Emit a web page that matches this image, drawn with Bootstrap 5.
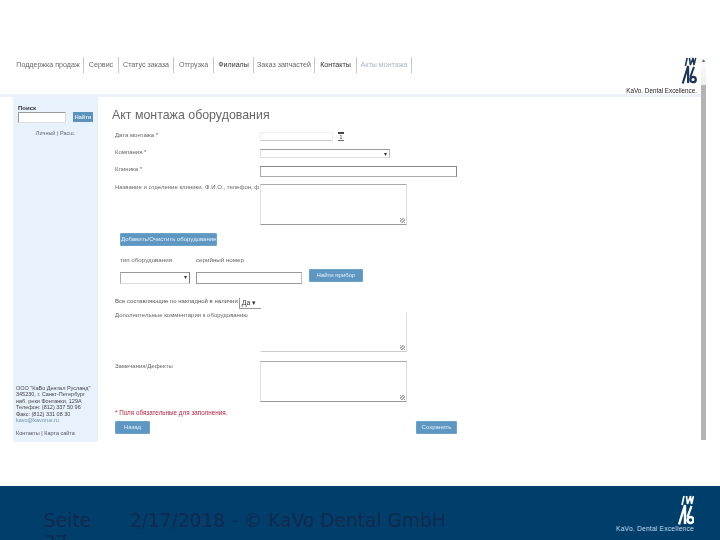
<!DOCTYPE html>
<html lang="ru"><head><meta charset="utf-8"><title>Акт монтажа оборудования</title>
<link rel="stylesheet" href="https://cdn.jsdelivr.net/npm/bootstrap@5.3.0/dist/css/bootstrap.min.css">
<style>
html,body{margin:0;height:540px;overflow:hidden;background:#fff;}
body{font-family:"Liberation Sans",sans-serif;font-size:6px;line-height:1.15;color:#555;}
.slide-top{height:486px;padding-top:57px;}
.shot{width:701px;filter:blur(.3px);}
.topnav{height:37px;padding-left:13px;}
.topnav .tab{height:16px;line-height:17px;border-right:1px solid #c4c8cc;font-size:7.1px;color:#666;white-space:nowrap;text-align:center;flex:none;}
.w1{width:71px;}.w2{width:35px;}.w3{width:55px;}.w4{width:40px;}.w5{width:40px;}.w6{width:61px;}.w7{width:42px;}.w8{width:55px;}
.topnav .tab-strong{color:#333;}
.topnav .tab-muted{color:#a9b4be;}
.brand-top{width:70px;padding-right:4px;}
.brand-top .slogan{font-size:6.3px;color:#222;white-space:nowrap;margin-top:3px;line-height:7px;}
.band{height:3px;background:#edf1fb;}
.side{width:85px;margin-left:13px;height:345px;background:#e8f2fc;padding:8px 5px 6px;font-size:6px;}
.side-title{font-weight:700;color:#333;font-size:6px;line-height:7px;}
.side-input{width:48px;height:11px;background:#fff;border:1px solid #999;border-bottom-color:#ddd;border-right-color:#ddd;}
.side-btn{width:20px;height:10px;background:#5b93bd;color:#dfeaf3;font-size:5.5px;font-weight:700;line-height:10px;text-align:center;}
.side-links{color:#667;text-align:center;margin-top:7px;font-size:5.5px;}
.addr{font-size:5.5px;line-height:6.5px;color:#444;margin-left:-2px;white-space:nowrap;}
.addr .mail{color:#6d8fae;}
.addr .foot{margin-top:6px;color:#556;}
.body-col{padding:8px 0 0 14px;width:360px;}
.page-h{font-size:12.4px;font-weight:400;color:#666;margin:0 0 7px;line-height:20px;white-space:nowrap;}
.lbl{width:145px;flex:none;font-size:6px;color:#666;white-space:nowrap;}
.frow{margin-left:3px;}
.fld{height:9px;border:1px solid #ddd;background:#fff;display:block;}
.fld-date{width:73px;border-color:#eee #eee #ccc #eee;}
.cal{width:6px;height:9px;margin-left:5px;border-top:2px solid #444;border-bottom:1px solid #666;color:#444;font-size:6px;line-height:6px;text-align:center;}
.sel{color:#333;font-size:6px;line-height:8px;text-align:right;padding-right:2px;}
.fld-sel{width:130px;height:9px;border-color:#999 #bbb #ddd #ddd;}
.fld-wide{width:197px;height:11px;border-color:#888 #888 #aaa #aaa;}
.area{width:147px;height:41px;border:1px solid #bbb;border-color:#aaa #ddd #999 #ddd;background:#fff;position:relative;}
.area::after{content:"";position:absolute;right:1px;bottom:1px;width:5px;height:5px;background:repeating-linear-gradient(135deg,#aaa 0 1px,transparent 1px 2px);}
.area-open{border-top-color:#fff;border-left-color:#fff;border-bottom-color:#ccc;height:40px;}
.bluebtn{background:#5e97c2;color:#e6f0f8;border:1px solid #6ea3c9;border-radius:1px;font-size:6px;line-height:11px;height:13px;padding:0;text-align:center;white-space:nowrap;}
.b-add{width:97px;margin:8px 0 0 8px;}
.equip-head{margin:10px 0 0 8px;font-size:6.2px;color:#666;}
.equip-head span:first-child{width:76px;}
.equip{margin:9px 0 0 8px;}
.fld-sm{width:70px;height:12px;border-color:#999 #777 #ddd #aaa;}
.fld-serial{width:106px;height:12px;margin-left:6px;border-color:#999 #bbb #999 #999;}
.b-find{width:54px;margin:-3px 0 0 7px;}
.row-yes{margin-top:14px;}
.yes{width:22px;height:11px;margin-left:1px;border-bottom:1px solid #999;border-left:1px solid #999;color:#333;font-size:7px;line-height:10px;padding-left:2px;}
.row-c1{margin-top:3px;}.row-c2{margin-top:9px;}.lbl-c2{padding-top:2px;}
.row-t{margin-top:7px;}
.req{color:#b3243d;font-size:6.3px;margin-top:7px;}
.actions{width:342px;margin:5px 0 0 3px;}
.b-back{width:35px;}.b-save{width:41px;}
.scroll-col{width:5px;color:#666;font-size:6px;line-height:6px;}
.scroll-cap{height:28px;background:linear-gradient(#fff,#eee);text-align:center;}
.scroller{height:355px;background:#b4b4b4;}
.slide-foot{height:54px;background:#003f6b;padding:24px 25px 0 44px;overflow:hidden;color:#13294f;font-family:"DejaVu Sans",sans-serif;font-size:18.6px;line-height:22px;}
.pg{width:86px;flex:none;}
.brand-foot{margin-top:-15px;width:80px;padding-right:1px;color:#c6d9ea;font-size:6.6px;font-family:"Liberation Sans",sans-serif;letter-spacing:.25px;line-height:8px;white-space:nowrap;}
</style></head><body>
<div class="slide-top d-flex">
 <div class="shot">
  <div class="topnav d-flex justify-content-between align-items-start">
   <nav class="d-flex">
    <span class="tab w1">Поддержка продаж</span><span class="tab w2">Сервис</span><span class="tab w3">Статус заказа</span><span class="tab w4">Отгрузка</span><span class="tab w5 tab-strong">Филиалы</span><span class="tab w6">Заказ запчастей</span><span class="tab w7 tab-strong">Контакты</span><span class="tab w8 tab-muted">Акты монтажа</span>
   </nav>
   <div class="brand-top d-flex flex-column align-items-end">
    <svg width="16" height="27" viewBox="0 0 16 30" fill="none" stroke="#1c3558"><path d="M6 1 4 10M8.500 1 9.500 9 12.500 1 13.500 9 15.500 1" stroke-width="1.7"/><path d="M1 29.500 7 10V29" stroke-width="2.400"/><path d="M9.500 22 13.500 11" stroke-width="2.200"/><circle cx="12.500" cy="25" r="3" stroke-width="2.600"/></svg>
    <div class="slogan">KaVo. Dental Excellence.</div>
   </div>
  </div>
  <div class="band"></div>
  <div class="d-flex">
   <aside class="side d-flex flex-column">
    <div class="side-title">Поиск</div>
    <div class="d-flex justify-content-between"><div class="side-input"></div><div class="side-btn">Найти</div></div>
    <div class="side-links">Личный | Расш.</div>
    <div class="addr mt-auto">ООО "КаВо Дентал Русланд"<br>345230, г. Санкт-Петербург<br>наб. реки Фонтанки, 129А<br>Телефон: (812) 337 50 96<br>Факс: (812) 331 08 30<br><span class="mail">kavo@kavorus.ru</span><div class="foot">Контакты | Карта сайта</div></div>
   </aside>
   <main class="body-col">
    <h1 class="page-h">Акт монтажа оборудования</h1>
    <div class="d-flex frow"><span class="lbl">Дата монтажа *</span><span class="fld fld-date"></span><span class="cal">1</span></div>
    <div class="d-flex frow mt-2"><span class="lbl">Компания *</span><span class="fld fld-sel sel">▾</span></div>
    <div class="d-flex frow mt-2"><span class="lbl">Клиника *</span><span class="fld fld-wide"></span></div>
    <div class="d-flex frow row-t"><span class="lbl">Название и отделение клиники, Ф.И.О., телефон, ф *</span><span class="area"></span></div>
    <button class="bluebtn b-add d-block" type="button">Добавить/Очистить оборудование</button>
    <div class="d-flex equip-head"><span>тип оборудования</span><span>серийный номер</span></div>
    <div class="d-flex equip"><span class="fld fld-sm sel">▾</span><span class="fld fld-serial"></span><button class="bluebtn b-find" type="button">Найти прибор</button></div>
    <div class="d-flex frow row-yes"><span>Все составляющие по накладной в наличии</span><span class="yes">Да&nbsp;▾</span></div>
    <div class="d-flex frow row-c1"><span class="lbl">Дополнительные комментарии к оборудованию</span><span class="area area-open"></span></div>
    <div class="d-flex frow row-c2"><span class="lbl lbl-c2">Замечания/Дефекты</span><span class="area"></span></div>
    <div class="req frow">* Поля обязательные для заполнения.</div>
    <div class="d-flex justify-content-between actions"><button class="bluebtn b-back" type="button">Назад</button><button class="bluebtn b-save" type="button">Сохранить</button></div>
   </main>
  </div>
 </div>
 <div class="scroll-col"><div class="scroll-cap">▴</div><div class="scroller"></div></div>
</div>
<footer class="slide-foot d-flex">
 <div class="pg">Seite<br>37</div>
 <div class="flex-grow-1">2/17/2018 - © KaVo Dental GmbH</div>
 <div class="brand-foot d-flex flex-column align-items-end">
  <svg width="16" height="30" viewBox="0 0 16 30" fill="none" stroke="#fff"><path d="M6 1 4 10M8.500 1 9.500 9 12.500 1 13.500 9 15.500 1" stroke-width="1.700"/><path d="M1 29.500 7 10V29" stroke-width="2.400"/><path d="M9.500 22 13.500 11" stroke-width="2.200"/><circle cx="12.500" cy="25" r="3" stroke-width="2.600"/></svg>
  <div>KaVo. Dental Excellence</div>
 </div>
</footer>
<script src="https://cdn.jsdelivr.net/npm/bootstrap@5.3.0/dist/js/bootstrap.bundle.min.js"></script>
</body></html>
